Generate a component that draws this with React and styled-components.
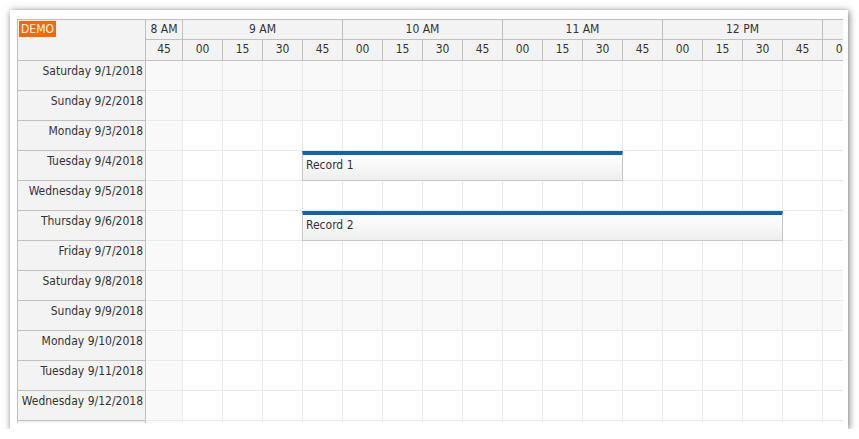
import React from "react";
import styled, { createGlobalStyle } from "styled-components";

const Global = createGlobalStyle`
  html, body { margin: 0; padding: 0; background: #fff; }
  body { font-family: "DejaVu Sans Condensed", "DejaVu Sans", Tahoma, sans-serif; font-size: 11px; color: #333; }
`;

const Page = styled.div`
  padding: 10px 0 0 10px;
`;

const Card = styled.div`
  width: 838px;
  height: 419px;
  box-sizing: border-box;
  padding: 9px 0 0 7px;
  background: #fff;
  box-shadow: 1px 1px 7px rgba(0, 0, 0, 0.55);
`;

const Scheduler = styled.div`
  width: 826px;
  height: 404px;
  box-sizing: border-box;
  border-left: 1px solid #c0c0c0;
  border-top: 1px solid #c0c0c0;
  overflow: hidden;
  display: flex;
  flex-direction: column;
`;

const HeaderBar = styled.div`
  display: flex;
  flex: none;
`;

const Corner = styled.div`
  width: 128px;
  height: 41px;
  flex: none;
  box-sizing: border-box;
  background: #f3f3f3;
  border-right: 1px solid #c0c0c0;
  border-bottom: 1px solid #c0c0c0;
  padding: 1px 0 0 1px;
`;

const Demo = styled.span`
  display: inline-block;
  background: #ff6600;
  color: #fff;
  font-family: "DejaVu Sans Condensed", "DejaVu Sans", sans-serif;
  font-size: 12px;
  line-height: 16px;
  padding: 0 2px;
`;

const Timeline = styled.div`
  display: flex;
  flex-direction: column;
  overflow: hidden;
  flex: 1;
`;

const HeaderRow = styled.div`
  display: flex;
  height: ${(p) => p.$h}px;
`;

const HeaderCell = styled.div`
  width: ${(p) => p.$w}px;
  flex: none;
  box-sizing: border-box;
  background: #f3f3f3;
  border-right: 1px solid #c0c0c0;
  border-bottom: 1px solid #c0c0c0;
  display: flex;
  align-items: center;
  justify-content: center;
  padding-bottom: 2px;
  white-space: nowrap;
  overflow: hidden;
  font-size: 12px;
  color: #333;
`;

const Body = styled.div`
  display: flex;
  flex: 1;
  min-height: 0;
`;

const RowHeaders = styled.div`
  width: 128px;
  flex: none;
  display: flex;
  flex-direction: column;
`;

const RowHeader = styled.div`
  height: 30px;
  flex: none;
  box-sizing: border-box;
  background: #f3f3f3;
  border-right: 1px solid #c0c0c0;
  border-bottom: 1px solid #c0c0c0;
  text-align: right;
  padding: 3px 2px 0 0;
  font-size: 12px;
  line-height: 14px;
  white-space: nowrap;
  color: #333;
`;

const Grid = styled.div`
  flex: 1;
  display: flex;
  flex-direction: column;
  overflow: hidden;
`;

const Row = styled.div`
  position: relative;
  display: flex;
  height: 30px;
  flex: none;
`;

const Cell = styled.div`
  width: ${(p) => p.$w}px;
  flex: none;
  box-sizing: border-box;
  background: ${(p) => (p.$off ? "#f9f9f9" : "#fff")};
  border-right: 1px solid #eaeaea;
  border-bottom: 1px solid #eaeaea;
`;

const Event = styled.div`
  position: absolute;
  top: 0;
  height: 30px;
  box-sizing: border-box;
  border: 1px solid #c8c8c8;
  border-top: 4px solid #1066a8;
  background: linear-gradient(to bottom, #ffffff 0%, #eeeeee 100%);
  padding: 3px 0 0 3px;
  font-size: 12px;
  line-height: 14px;
  color: #333;
  white-space: nowrap;
  overflow: hidden;
`;

const columns = [
  { w: 37, label: "45" },
  ...["9", "10", "11", "12", "1"].flatMap((h) =>
    ["00", "15", "30", "45"].map((m) => ({ w: 40, label: m }))
  ),
].slice(0, 18);

const groups = [
  { w: 37, label: "8 AM" },
  { w: 160, label: "9 AM" },
  { w: 160, label: "10 AM" },
  { w: 160, label: "11 AM" },
  { w: 160, label: "12 PM" },
  { w: 160, label: "1 PM" },
];

const days = [
  ["Saturday 9/1/2018", true],
  ["Sunday 9/2/2018", true],
  ["Monday 9/3/2018", false],
  ["Tuesday 9/4/2018", false],
  ["Wednesday 9/5/2018", false],
  ["Thursday 9/6/2018", false],
  ["Friday 9/7/2018", false],
  ["Saturday 9/8/2018", true],
  ["Sunday 9/9/2018", true],
  ["Monday 9/10/2018", false],
  ["Tuesday 9/11/2018", false],
  ["Wednesday 9/12/2018", false],
  ["Thursday 9/13/2018", false],
];

const events = {
  3: [{ text: "Record 1", left: 156, width: 321 }],
  5: [{ text: "Record 2", left: 156, width: 481 }],
};

export default function App() {
  return (
    <>
      <Global />
      <Page>
        <Card>
          <Scheduler>
            <HeaderBar>
              <Corner>
                <Demo>DEMO</Demo>
              </Corner>
              <Timeline>
                <HeaderRow $h={20}>
                  {groups.map((g, i) => (
                    <HeaderCell key={i} $w={g.w}>
                      {g.label}
                    </HeaderCell>
                  ))}
                </HeaderRow>
                <HeaderRow $h={21}>
                  {columns.map((c, i) => (
                    <HeaderCell key={i} $w={c.w}>
                      {c.label}
                    </HeaderCell>
                  ))}
                </HeaderRow>
              </Timeline>
            </HeaderBar>
            <Body>
              <RowHeaders>
                {days.map(([d]) => (
                  <RowHeader key={d}>{d}</RowHeader>
                ))}
              </RowHeaders>
              <Grid>
                {days.map(([d, weekend], r) => (
                  <Row key={d}>
                    {columns.map((c, i) => (
                      <Cell key={i} $w={c.w} $off={weekend || i === 0} />
                    ))}
                    {(events[r] || []).map((e) => (
                      <Event
                        key={e.text}
                        style={{ left: e.left, width: e.width }}
                      >
                        {e.text}
                      </Event>
                    ))}
                  </Row>
                ))}
              </Grid>
            </Body>
          </Scheduler>
        </Card>
      </Page>
    </>
  );
}
